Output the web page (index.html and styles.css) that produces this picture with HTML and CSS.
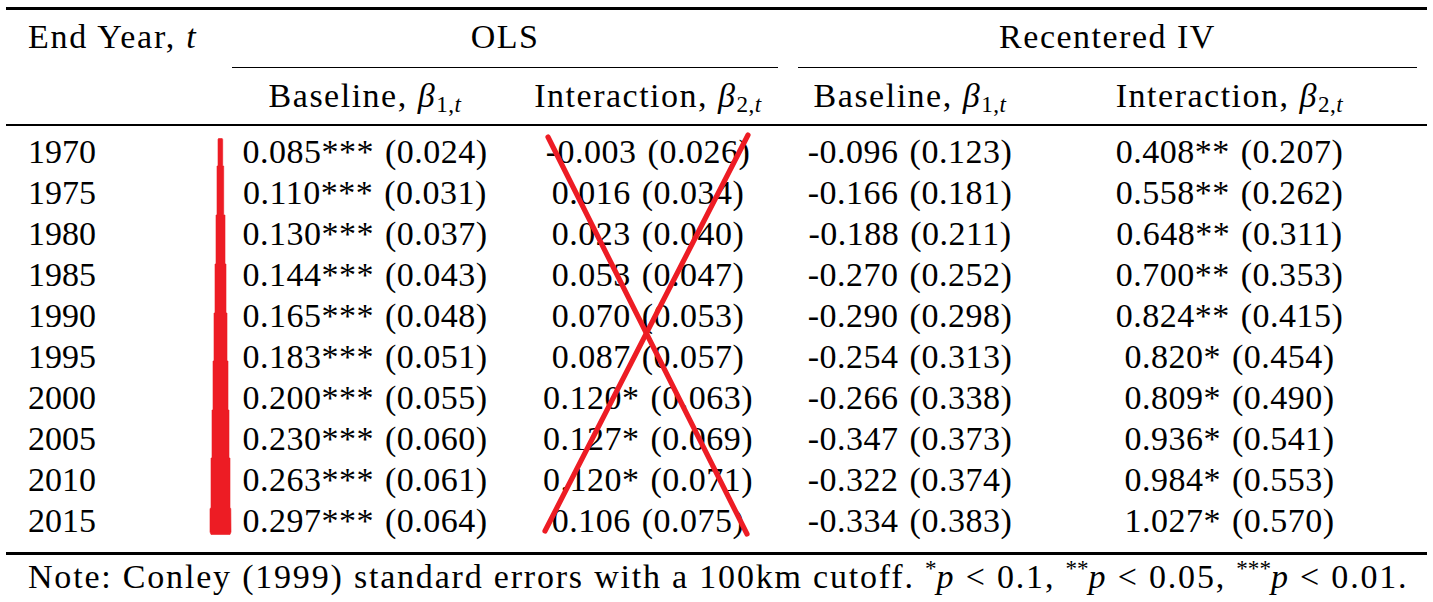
FILE: index.html
```html
<!DOCTYPE html>
<html lang="en">
<head>
<meta charset="utf-8">
<title>Regression table</title>
<link rel="stylesheet" href="styles.css">
</head>
<body>
<div class="table">
  <div class="rule rule-thick"></div>
  <div class="row head1">
    <div class="cell first text wide">End Year, <i>t</i></div>
    <div class="group text">OLS</div>
    <div class="group text">Recentered IV</div>
  </div>
  <div class="row head2">
    <div class="cell"></div>
    <div class="cell text">Baseline, <i>β</i><sub>1,<i>t</i></sub></div>
    <div class="cell text">Interaction, <i>β</i><sub>2,<i>t</i></sub></div>
    <div class="cell text">Baseline, <i>β</i><sub>1,<i>t</i></sub></div>
    <div class="cell text">Interaction, <i>β</i><sub>2,<i>t</i></sub></div>
  </div>
  <div class="rule rule-mid"></div>
  <div class="body">
    <div class="row data"><div class="cell first">1970</div><div class="cell num">0.085*** (0.024)</div><div class="cell num">-0.003 (0.026)</div><div class="cell num">-0.096 (0.123)</div><div class="cell num">0.408** (0.207)</div></div>
    <div class="row data"><div class="cell first">1975</div><div class="cell num">0.110*** (0.031)</div><div class="cell num">0.016 (0.034)</div><div class="cell num">-0.166 (0.181)</div><div class="cell num">0.558** (0.262)</div></div>
    <div class="row data"><div class="cell first">1980</div><div class="cell num">0.130*** (0.037)</div><div class="cell num">0.023 (0.040)</div><div class="cell num">-0.188 (0.211)</div><div class="cell num">0.648** (0.311)</div></div>
    <div class="row data"><div class="cell first">1985</div><div class="cell num">0.144*** (0.043)</div><div class="cell num">0.053 (0.047)</div><div class="cell num">-0.270 (0.252)</div><div class="cell num">0.700** (0.353)</div></div>
    <div class="row data"><div class="cell first">1990</div><div class="cell num">0.165*** (0.048)</div><div class="cell num">0.070 (0.053)</div><div class="cell num">-0.290 (0.298)</div><div class="cell num">0.824** (0.415)</div></div>
    <div class="row data"><div class="cell first">1995</div><div class="cell num">0.183*** (0.051)</div><div class="cell num">0.087 (0.057)</div><div class="cell num">-0.254 (0.313)</div><div class="cell num">0.820* (0.454)</div></div>
    <div class="row data"><div class="cell first">2000</div><div class="cell num">0.200*** (0.055)</div><div class="cell num">0.120* (0.063)</div><div class="cell num">-0.266 (0.338)</div><div class="cell num">0.809* (0.490)</div></div>
    <div class="row data"><div class="cell first">2005</div><div class="cell num">0.230*** (0.060)</div><div class="cell num">0.127* (0.069)</div><div class="cell num">-0.347 (0.373)</div><div class="cell num">0.936* (0.541)</div></div>
    <div class="row data"><div class="cell first">2010</div><div class="cell num">0.263*** (0.061)</div><div class="cell num">0.120* (0.071)</div><div class="cell num">-0.322 (0.374)</div><div class="cell num">0.984* (0.553)</div></div>
    <div class="row data"><div class="cell first">2015</div><div class="cell num">0.297*** (0.064)</div><div class="cell num">0.106 (0.075)</div><div class="cell num">-0.334 (0.383)</div><div class="cell num">1.027* (0.570)</div></div>
  </div>
  <div class="rule rule-thick"></div>
  <div class="note text wide">Note: Conley (1999) standard errors with a 100km cutoff. <sup>*</sup><i>p</i> &lt; 0.1, <sup>**</sup><i>p</i> &lt; 0.05, <sup>***</sup><i>p</i> &lt; 0.01.</div>
</div>
<svg class="marks" width="1433" height="602" viewBox="0 0 1433 602" aria-hidden="true">
  <polygon fill="#ed1c24" stroke="#ed1c24" stroke-width="0.6" stroke-linejoin="round" points="218,139.5 218.5,138.5 222.2,138.5 222.7,139.5 222.7,166 223.7,166 223.7,215 225,215 225,264 226,264 226,313 227,313 227,361 228,361 228,410 229,410 229,458 230,458 230,508 230.8,508.5 231,532 230,534.5 211,534.5 210,532 210,508.5 211,508 211,458 212,458 212,410 213,410 213,361 214,361 214,313 215,313 215,264 216,264 216,215 217,215 217,166 218,166"/>
  <line x1="548" y1="137" x2="747" y2="534" stroke="#ed1c24" stroke-width="5.2" stroke-linecap="round"/>
  <line x1="748" y1="135" x2="545" y2="531" stroke="#ed1c24" stroke-width="5.2" stroke-linecap="round"/>
</svg>
</body>
</html>
```

FILE: styles.css
```css
html, body {
  margin: 0;
  padding: 0;
  background: #ffffff;
}

body {
  position: relative;
  width: 1433px;
  height: 602px;
  overflow: hidden;
  font-family: "Liberation Serif", "Times New Roman", serif;
  font-size: 34px;
  color: #000000;
}

.table {
  margin: 7px 6px 0 6px;
  width: 1421px;
}

.rule {
  background: #000000;
}

.rule-thick {
  height: 3px;
}

.rule-mid {
  height: 2px;
}

.row {
  display: grid;
  grid-template-columns: 216px 286px 280px 244px 395px;
}

.cell {
  line-height: 41px;
  height: 41px;
  white-space: nowrap;
  text-align: center;
}

.cell.first {
  text-align: left;
  padding-left: 22px;
}

.text {
  letter-spacing: 1.5px;
}

.text.wide {
  letter-spacing: 1.8px;
}

.num {
  letter-spacing: 0.5px;
  word-spacing: 2px;
}

.head1 {
  padding-top: 6px;
}

.group {
  grid-column: span 2;
  margin: 0 10px;
  line-height: 41px;
  padding-bottom: 10px;
  border-bottom: 1px solid #000000;
  text-align: center;
  white-space: nowrap;
}

.head2 {
  padding: 7px 0 8px 0;
}

.body {
  padding: 5px 0 11px 0;
}

sub {
  font-size: 0.68em;
  vertical-align: -0.22em;
  line-height: 0;
  letter-spacing: 0.5px;
}

sup {
  font-size: 0.68em;
  vertical-align: 0.5em;
  line-height: 0;
  letter-spacing: 0;
}

.note {
  padding: 1px 0 0 22px;
  line-height: 41px;
  white-space: nowrap;
}

.marks {
  position: absolute;
  top: 0;
  left: 0;
  pointer-events: none;
}
```
